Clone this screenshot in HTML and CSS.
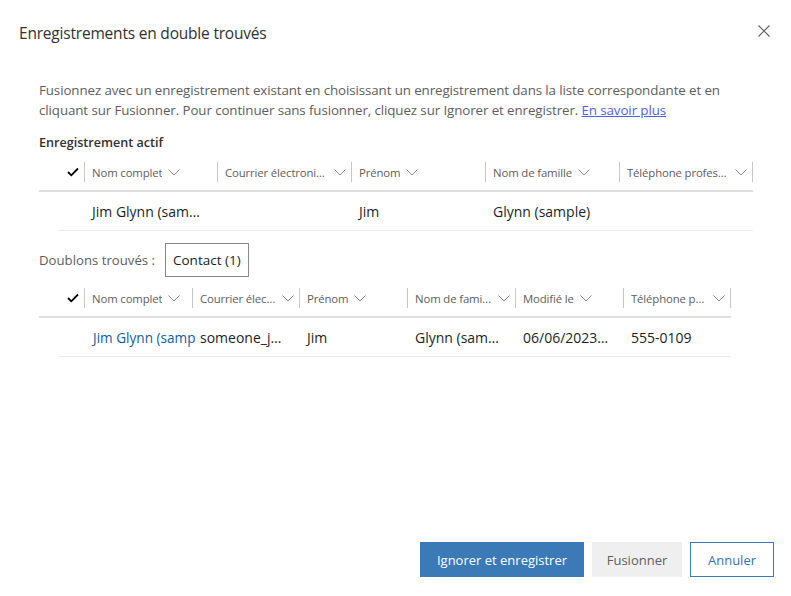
FILE: index.html
```html
<!DOCTYPE html>
<html lang="fr">
<head>
<meta charset="utf-8">
<title>Enregistrements en double trouvés</title>
<link rel="stylesheet" href="styles.css">
</head>
<body>
<div class="dialog">
  <header class="dlg-head">
    <h1 class="dlg-title">Enregistrements en double trouvés</h1>
    <button class="close" aria-label="Fermer">
      <svg width="12" height="12" viewBox="0 0 12 12"><path d="M0.5 0.5 L11.5 11.5 M11.5 0.5 L0.5 11.5" stroke="#605e5c" stroke-width="1.1" fill="none"/></svg>
    </button>
  </header>

  <div class="dlg-body">
    <p class="intro">Fusionnez avec un enregistrement existant en choisissant un enregistrement dans la liste correspondante et en<br>cliquant sur Fusionner. Pour continuer sans fusionner, cliquez sur Ignorer et enregistrer. <a class="more" href="#">En savoir plus</a></p>

    <h2 class="section-label">Enregistrement actif</h2>

    <div class="grid grid-active">
      <div class="grid-head">
        <div class="col-check"><svg class="check" width="12" height="10" viewBox="0 0 12 10"><path d="M1 5 L4.3 8.3 L11 1.5" stroke="#000" stroke-width="1.8" fill="none"/></svg></div>
        <div class="hcell"><span class="htext">Nom complet</span><svg class="chev" width="12" height="7" viewBox="0 0 12 7"><path d="M0.5 0.5 L6 6 L11.5 0.5" stroke="#8a8886" fill="none"/></svg></div>
        <div class="hcell"><span class="htext">Courrier électronique</span><svg class="chev" width="12" height="7" viewBox="0 0 12 7"><path d="M0.5 0.5 L6 6 L11.5 0.5" stroke="#8a8886" fill="none"/></svg></div>
        <div class="hcell"><span class="htext">Prénom</span><svg class="chev" width="12" height="7" viewBox="0 0 12 7"><path d="M0.5 0.5 L6 6 L11.5 0.5" stroke="#8a8886" fill="none"/></svg></div>
        <div class="hcell"><span class="htext">Nom de famille</span><svg class="chev" width="12" height="7" viewBox="0 0 12 7"><path d="M0.5 0.5 L6 6 L11.5 0.5" stroke="#8a8886" fill="none"/></svg></div>
        <div class="hcell last"><span class="htext">Téléphone professionnel</span><svg class="chev" width="12" height="7" viewBox="0 0 12 7"><path d="M0.5 0.5 L6 6 L11.5 0.5" stroke="#8a8886" fill="none"/></svg></div>
      </div>
      <div class="grid-row">
        <div class="col-check"></div>
        <div class="cell">Jim Glynn (sample)</div>
        <div class="cell"></div>
        <div class="cell">Jim</div>
        <div class="cell">Glynn (sample)</div>
        <div class="cell"></div>
      </div>
    </div>

    <div class="dup-bar">
      <span class="dup-label">Doublons trouvés :</span>
      <button class="tab">Contact (1)</button>
    </div>

    <div class="grid grid-dup">
      <div class="grid-head">
        <div class="col-check"><svg class="check" width="12" height="10" viewBox="0 0 12 10"><path d="M1 5 L4.3 8.3 L11 1.5" stroke="#000" stroke-width="1.8" fill="none"/></svg></div>
        <div class="hcell"><span class="htext">Nom complet</span><svg class="chev" width="12" height="7" viewBox="0 0 12 7"><path d="M0.5 0.5 L6 6 L11.5 0.5" stroke="#8a8886" fill="none"/></svg></div>
        <div class="hcell"><span class="htext">Courrier électronique</span><svg class="chev" width="12" height="7" viewBox="0 0 12 7"><path d="M0.5 0.5 L6 6 L11.5 0.5" stroke="#8a8886" fill="none"/></svg></div>
        <div class="hcell"><span class="htext">Prénom</span><svg class="chev" width="12" height="7" viewBox="0 0 12 7"><path d="M0.5 0.5 L6 6 L11.5 0.5" stroke="#8a8886" fill="none"/></svg></div>
        <div class="hcell"><span class="htext">Nom de famille</span><svg class="chev" width="12" height="7" viewBox="0 0 12 7"><path d="M0.5 0.5 L6 6 L11.5 0.5" stroke="#8a8886" fill="none"/></svg></div>
        <div class="hcell"><span class="htext">Modifié le</span><svg class="chev" width="12" height="7" viewBox="0 0 12 7"><path d="M0.5 0.5 L6 6 L11.5 0.5" stroke="#8a8886" fill="none"/></svg></div>
        <div class="hcell last"><span class="htext">Téléphone professionnel</span><svg class="chev" width="12" height="7" viewBox="0 0 12 7"><path d="M0.5 0.5 L6 6 L11.5 0.5" stroke="#8a8886" fill="none"/></svg></div>
      </div>
      <div class="grid-row">
        <div class="col-check"></div>
        <div class="cell clip"><a class="rec-link" href="#">Jim Glynn (sample)</a></div>
        <div class="cell">someone_j@example.com</div>
        <div class="cell">Jim</div>
        <div class="cell">Glynn (sample)</div>
        <div class="cell date">06/06/2023 10:15</div>
        <div class="cell">555-0109</div>
      </div>
    </div>
  </div>

  <footer class="dlg-foot">
    <button class="btn btn-primary">Ignorer et enregistrer</button>
    <button class="btn btn-disabled">Fusionner</button>
    <button class="btn btn-outline">Annuler</button>
  </footer>
</div>
</body>
</html>
```

FILE: styles.css
```css
* { box-sizing: border-box; }

html, body {
  margin: 0;
  padding: 0;
  background: #ffffff;
}

body {
  font-family: "Segoe UI", "Open Sans", sans-serif;
  color: #323130;
}

.dialog {
  width: 791px;
  height: 596px;
  display: flex;
  flex-direction: column;
}

.dlg-head {
  display: flex;
  align-items: center;
  justify-content: space-between;
  padding: 21px 21px 0 19px;
  height: 45px;
}

.dlg-title {
  margin: 0;
  font-size: 15.5px;
  font-weight: 400;
  line-height: 24px;
  letter-spacing: -0.2px;
  color: #323130;
}

.close {
  border: 0;
  background: transparent;
  padding: 0;
  width: 12px;
  height: 12px;
  display: flex;
  margin-top: -4px;
}

.dlg-body {
  padding: 0 0 0 39px;
}

.intro {
  margin: 35px 0 0 0;
  font-size: 13.35px;
  line-height: 20px;
  color: #605e5c;
  letter-spacing: -0.1px;
}

.more {
  color: #4f5fe8;
  text-decoration: underline;
}

.section-label {
  margin: 13px 0 0 0;
  font-size: 12.6px;
  line-height: 20px;
  font-weight: 600;
  color: #323130;
}

.grid-active { margin-top: 5px; }
.grid-dup { margin-top: 7px; }

.grid-head {
  display: flex;
  height: 34px;
  padding-top: 4px;
  border-bottom: 2px solid #e1dfdd;
}

.grid-active .grid-head { width: 714px; }
.grid-dup .grid-head { width: 692px; }

.col-check {
  flex: 0 0 45px;
  height: 20px;
  display: flex;
  align-items: center;
  padding-left: 28px;
}

.grid-row .col-check { flex-basis: 25px; }

.hcell {
  height: 20px;
  display: flex;
  align-items: center;
  border-left: 1px solid #c8c6c4;
  padding: 0 5px 0 7px;
  min-width: 0;
}

.hcell.last { border-right: 1px solid #c8c6c4; }

.htext {
  font-size: 11.4px;
  letter-spacing: -0.15px;
  color: #605e5c;
  white-space: nowrap;
  overflow: hidden;
  text-overflow: ellipsis;
  min-width: 0;
}

.chev {
  flex: 0 0 12px;
  margin-left: 6px;
  margin-top: 1px;
}

.grid-active .hcell, .grid-active .cell { flex: 0 0 134px; }
.grid-active .grid-head .hcell:nth-child(2),
.grid-active .grid-row .cell:nth-child(2) { flex-basis: 133px; }

.grid-dup .hcell, .grid-dup .cell { flex: 0 0 108px; }
.grid-dup .grid-head .hcell:nth-child(3),
.grid-dup .grid-row .cell:nth-child(3) { flex-basis: 107px; }

.grid-row {
  display: flex;
  align-items: center;
  margin-left: 20px;
  height: 39px;
  border-bottom: 1px solid #edebe9;
}

.grid-active .grid-row { width: 694px; }
.grid-dup .grid-row { width: 672px; }

.cell {
  font-size: 14px;
  color: #201f1e;
  padding: 0 12px 0 5px;
  white-space: nowrap;
  overflow: hidden;
  text-overflow: ellipsis;
  min-width: 0;
}

.cell.date { padding-right: 15px; }

.cell.clip { text-overflow: clip; padding-right: 0; padding-left: 6px; }

.rec-link {
  color: #115ea3;
  text-decoration: none;
  font-size: 13.6px;
}

.dup-bar {
  display: flex;
  align-items: center;
  margin-top: 12px;
  height: 34px;
}

.dup-label {
  font-size: 13.2px;
  color: #605e5c;
  margin-right: 10px;
}

.tab {
  height: 34px;
  border: 1px solid #8a8886;
  background: #ffffff;
  font-family: inherit;
  font-size: 13.5px;
  color: #201f1e;
  padding: 0 7px;
}

.dlg-foot {
  margin-top: auto;
  display: flex;
  justify-content: flex-end;
  gap: 8px;
  padding: 0 17px 19px 0;
}

.btn {
  height: 35px;
  font-family: inherit;
  font-size: 13px;
  border: 1px solid transparent;
  padding: 0;
}

.btn-primary {
  width: 164px;
  background: #3b79b7;
  border-color: #3b79b7;
  color: #ffffff;
}

.btn-disabled {
  width: 90px;
  background: #efefef;
  border-color: #efefef;
  color: #605e5c;
}

.btn-outline {
  width: 84px;
  background: #ffffff;
  border-color: #3b79b7;
  color: #3b6fa8;
}
```
